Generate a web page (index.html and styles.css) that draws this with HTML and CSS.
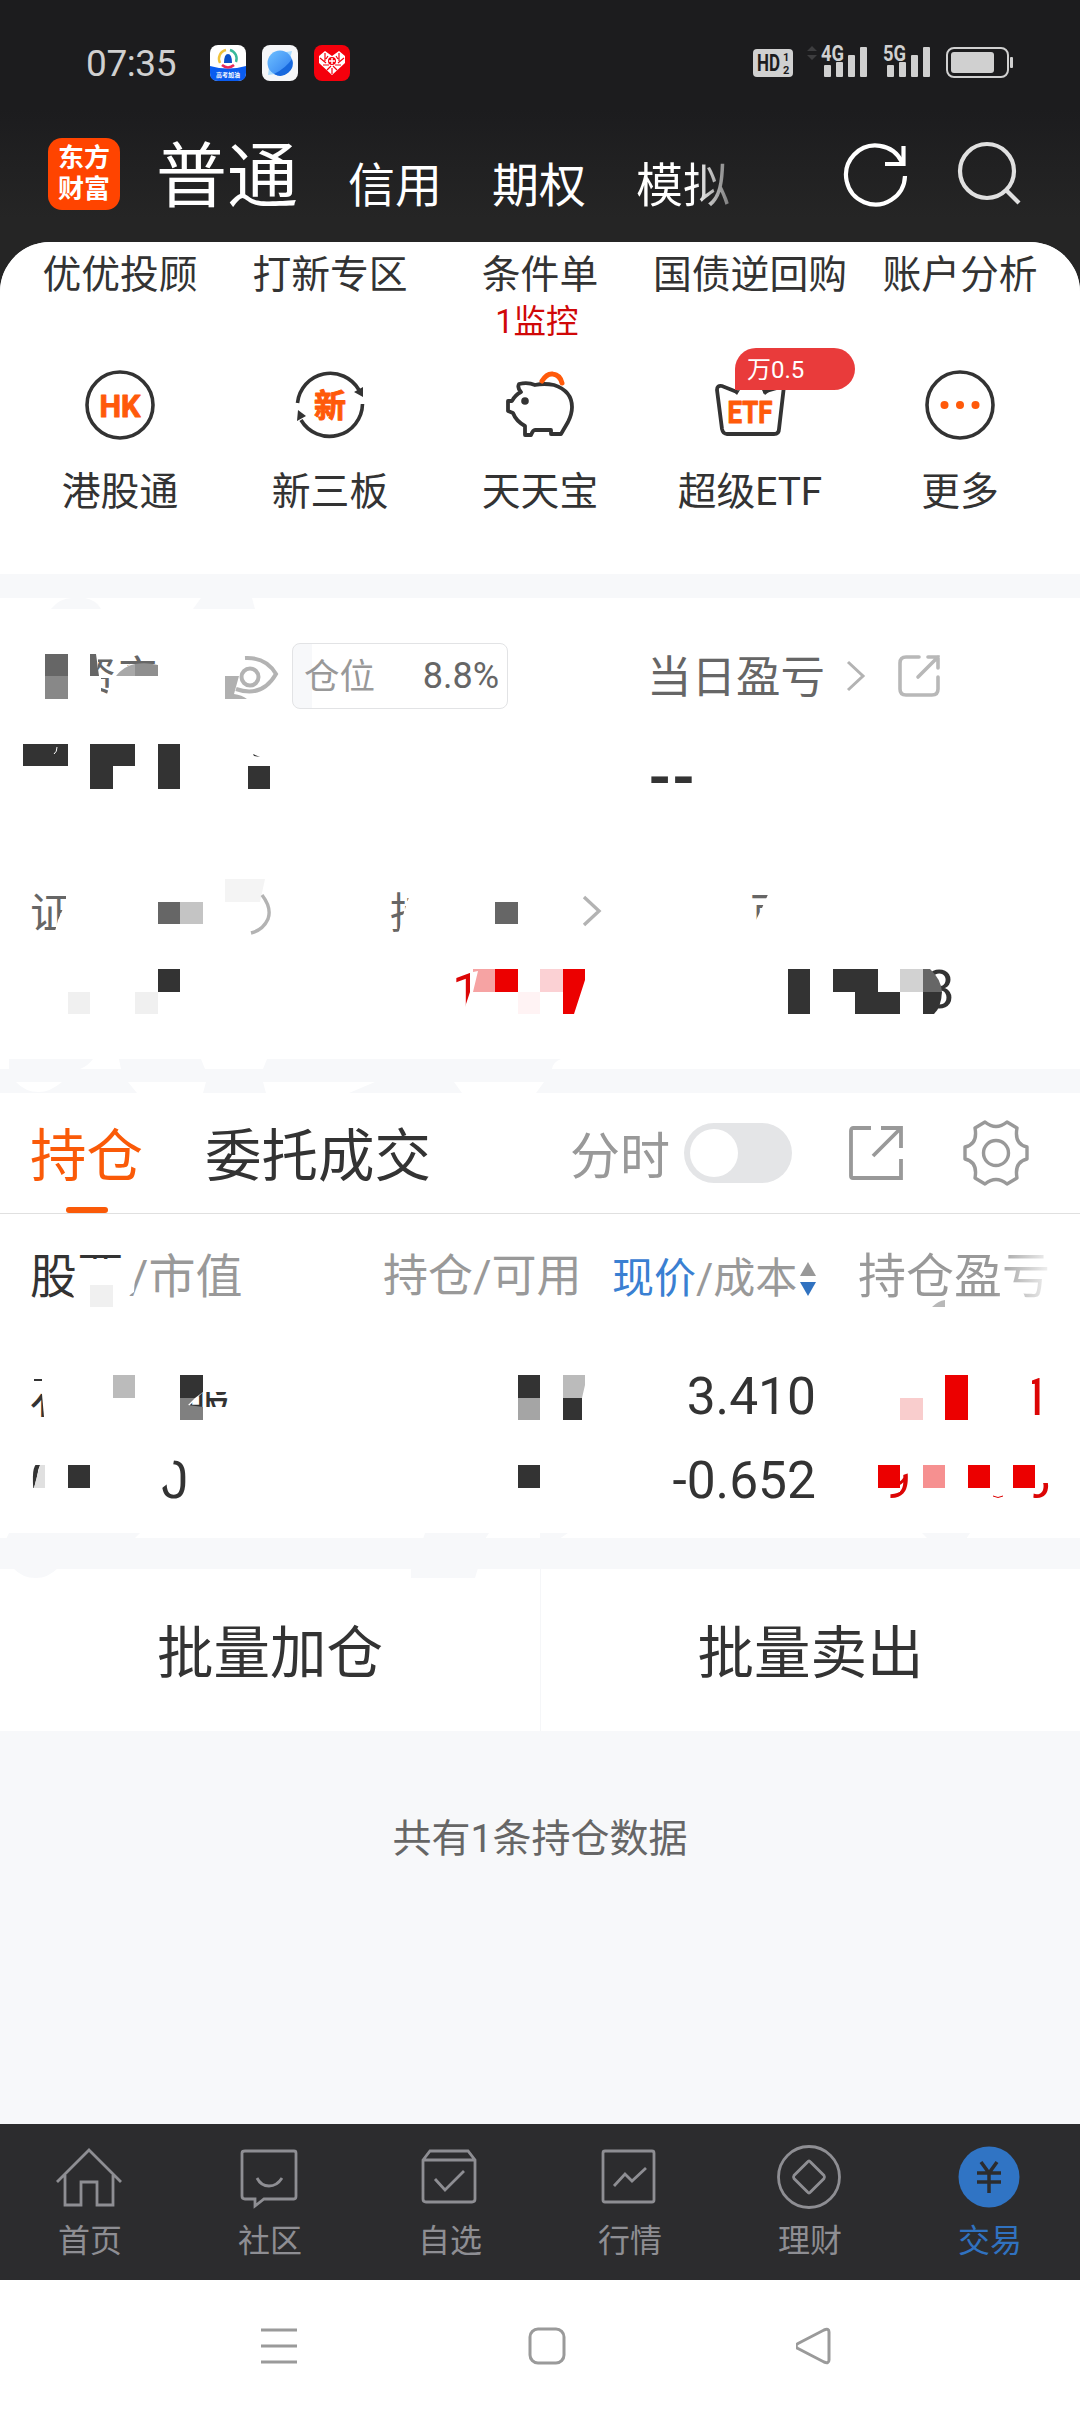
FILE: index.html
```html
<!DOCTYPE html>
<html lang="zh-CN">
<head>
  <meta charset="UTF-8" />
  <meta name="viewport" content="width=device-width, initial-scale=1.0"/>
  <title>交易</title>
  <link rel="stylesheet" href="styles.css">
</head>
<body>
  <header class="top">
    <div class="status-bar">
      <span class="time">07:35</span>
      <div class="app-icons">
        <svg width="36" height="36" viewBox="0 0 36 36">
          <rect width="36" height="36" rx="8" fill="#fff"/>
          <path d="M0 21Q18 26 36 21V28Q36 36 28 36H8Q0 36 0 28Z" fill="#0a5cf0"/>
          <path d="M10 18A9 9 0 0 1 16 5" fill="none" stroke="#f0c23a" stroke-width="2.4"/>
          <path d="M20 5A9 9 0 0 1 26 17" fill="none" stroke="#39b99a" stroke-width="2.4"/>
          <path d="M12 20Q18 25 24 20" fill="none" stroke="#e8295b" stroke-width="2.6"/>
          <path d="M14 18Q14 9 18 9T22 18Z" fill="#0b50c8"/>
          <text x="18" y="32" class="app-mini">高考加油</text>
        </svg>
        <svg width="36" height="36" viewBox="0 0 36 36">
          <defs>
            <linearGradient id="planet" x1="0" y1="0" x2="1" y2="1">
              <stop offset="0" stop-color="#6fc0ff"/>
              <stop offset="1" stop-color="#2d7df0"/>
            </linearGradient>
          </defs>
          <rect width="36" height="36" rx="8" fill="#f5f6f8"/>
          <path d="M24 7L30 6L28 14ZM7 23L6 30L13 29Z" fill="#a9dcff"/>
          <circle cx="18" cy="18" r="12.5" fill="url(#planet)"/>
          <path d="M30 14A12.5 12.5 0 0 1 12 29Q24 23 30 14Z" fill="#1768dd"/>
        </svg>
        <svg width="36" height="36" viewBox="0 0 36 36">
          <rect width="36" height="36" rx="8" fill="#f5000c"/>
          <path d="M18 30L5 18V11L11 6L18 11L25 6L31 11V18Z" fill="#fff"/>
          <path d="M6 13L12 18M11 8V16M25 8V16M30 13L24 18M9 20H15M21 20H27M14 11L12 14M22 11L24 14M13 25L17 21M23 25L19 21M18 23V29" stroke="#f5000c" stroke-width="1.2"/>
          <circle cx="18" cy="16" r="4" fill="#f5000c"/>
          <path d="M15 16H21M18 13V19" stroke="#fff" stroke-width="1.4"/>
        </svg>
      </div>
      <svg class="signals" width="262" height="56" viewBox="752 35 262 56">
        <rect x="753" y="49" width="40" height="28" rx="4" fill="#d0d0d0"/>
        <text x="757" y="71" class="hd" textLength="23" lengthAdjust="spacingAndGlyphs">HD</text>
        <text x="783" y="61" class="hd-sub">1</text>
        <text x="783" y="74" class="hd-sub">2</text>
        <path d="M807 51L812 46L817 51ZM807 55L812 60L817 55Z" fill="#3d3d3f"/>
        <g fill="#d0d0d0">
          <text x="821" y="61" class="net" textLength="23" lengthAdjust="spacingAndGlyphs">4G</text>
          <rect x="824" y="65" width="7" height="12" rx="1"/>
          <rect x="836" y="62" width="7" height="15" rx="1"/>
          <rect x="848" y="55" width="7" height="22" rx="1"/>
          <rect x="860" y="47" width="7" height="30" rx="1"/>
          <text x="883" y="61" class="net" textLength="23" lengthAdjust="spacingAndGlyphs">5G</text>
          <rect x="887" y="65" width="7" height="12" rx="1"/>
          <rect x="899" y="62" width="7" height="15" rx="1"/>
          <rect x="911" y="55" width="7" height="22" rx="1"/>
          <rect x="923" y="47" width="7" height="30" rx="1"/>
          <rect x="951" y="52" width="43" height="21" rx="3"/>
          <rect x="1010" y="57" width="3" height="11" rx="1"/>
        </g>
        <rect x="947" y="48" width="61" height="29" rx="7" fill="none" stroke="#d0d0d0" stroke-width="2"/>
      </svg>
    </div>
    <nav class="account-nav">
      <div class="logo"><span>东方</span><span>财富</span></div>
      <span class="account active">普通</span>
      <span class="account">信用</span>
      <span class="account">期权</span>
      <span class="account fade">模拟</span>
      <svg class="refresh" width="66" height="66" viewBox="843 142 66 66" fill="none" stroke="#fff" stroke-width="4.2">
        <path d="M905 176A29.500 29.500 0 1 1 902 162"/>
        <path d="M903.500 146V164H885"/>
      </svg>
      <svg class="search" width="66" height="66" viewBox="956 140 66 66" fill="none" stroke="#e0e0e0" stroke-width="4.2">
        <circle cx="987" cy="171" r="27"/>
        <path d="M1006 190L1019 203"/>
      </svg>
    </nav>
  </header>

  <main>
    <section class="menu">
      <div class="menu-row">
        <div class="menu-item"><span>优优投顾</span></div>
        <div class="menu-item"><span>打新专区</span></div>
        <div class="menu-item"><span>条件单</span><small>1监控</small></div>
        <div class="menu-item"><span>国债逆回购</span></div>
        <div class="menu-item"><span>账户分析</span></div>
      </div>
      <div class="menu-row icons">
        <div class="menu-item">
          <svg width="76" height="76" viewBox="-38 -38 76 76">
            <circle r="33" fill="none" stroke="#333" stroke-width="3.6"/>
            <text x="0" y="12" class="icon-text" textLength="41" lengthAdjust="spacingAndGlyphs">HK</text>
          </svg>
          <span>港股通</span>
        </div>
        <div class="menu-item">
          <svg width="76" height="76" viewBox="-38 -38 76 76">
            <path d="M-32.500 -2A33 33 0 0 1 29 -15M32.500 -1A33 33 0 0 1 -29 15" fill="none" stroke="#333" stroke-width="3.6"/>
            <path d="M24 -13L33 -18V-8ZM-24 11L-32 5L-33 16Z" fill="#333"/>
            <text x="0" y="12" class="icon-text cjk">新</text>
          </svg>
          <span>新三板</span>
        </div>
        <div class="menu-item">
          <svg width="76" height="76" viewBox="-38 -38 76 76">
            <path d="M-21 -21Q-12 -23 -5 -20Q4 -22 14 -20Q32 -14 32 2Q32 9 28 17L21 29H11V25H-5V25Q-7 25 -9 30H-15V21Q-24 16 -27 8L-32 6V-4H-28Q-25 -10 -19 -13Q-23 -17 -21 -21Z" fill="none" stroke="#333" stroke-width="3.8" stroke-linejoin="round"/>
            <circle cx="-15" cy="-4" r="3.800" fill="#333"/>
            <path d="M2 -24Q7 -32 13 -31Q20 -30 22 -22" fill="none" stroke="#ff5a0a" stroke-width="5" stroke-linecap="round"/>
          </svg>
          <span>天天宝</span>
        </div>
        <div class="menu-item">
          <svg width="76" height="76" viewBox="-38 -38 76 76">
            <path d="M-13 -13L-28 -19Q-33 -20 -33 -15L-28 24Q-27 29 -23 29H24Q29 29 29 24L34 -19L13 -13" fill="none" stroke="#333" stroke-width="3.800"/>
            <path d="M-17 -14L-13 -10L-10 -15M12 -15L15 -10L20 -14" fill="#333"/>
            <text x="0" y="18" class="icon-text" textLength="45" lengthAdjust="spacingAndGlyphs">ETF</text>
          </svg>
          <em class="badge">万0.5</em>
          <span>超级ETF</span>
        </div>
        <div class="menu-item">
          <svg width="76" height="76" viewBox="-38 -38 76 76">
            <circle r="33" fill="none" stroke="#333" stroke-width="3.6"/>
            <g fill="#ff5a0a"><circle cx="-15.500" r="4"/><circle r="4"/><circle cx="15.500" r="4"/></g>
          </svg>
          <span>更多</span>
        </div>
      </div>
    </section>

    <section class="assets">
      <div class="assets-head">
        <div class="position"><span>仓位</span><b>8.8%</b></div>
        <div class="today">
          <span>当日盈亏</span>
          <svg width="20" height="32" viewBox="0 0 20 32" fill="none" stroke="#b3b3b3" stroke-width="3"><path d="M2 2L17 16L2 30"/></svg>
          <svg class="share" width="44" height="44" viewBox="0 0 44 44" fill="none" stroke="#b8b8b8" stroke-width="3.600" stroke-linecap="round">
            <path d="M22 3H9Q3 3 3 9V35Q3 41 9 41H35Q41 41 41 35V23"/>
            <path d="M31 3H41V14M41 3L21 23"/>
          </svg>
        </div>
      </div>
      <div class="today-value">--</div>

      <!-- hidden amounts -->
      <svg class="mosaic" width="1080" height="495" viewBox="0 598 1080 495">
        <defs>
          <clipPath id="c1"><path d="M98 654H158V664H130L116 676H98ZM101 678H112L107 694H101Z"/></clipPath>
          <clipPath id="c2"><path d="M30 888H66V902L58 920L54 935H30Z"/></clipPath>
          <clipPath id="c3"><path d="M388 888H412L404 912L398 935H388Z"/></clipPath>
          <clipPath id="c4"><path d="M748 890H770L762 908L756 920H748Z"/></clipPath>
          <clipPath id="c5"><path d="M450 966H470V992L464 1010H450Z"/></clipPath>
        </defs>
        <g fill="#f7f8fa">
          <path d="M51 609Q60 598 72 598H85Q96 600 101 609ZM193 609L201 598H252L255 609Z"/>
          <path d="M9 1069V1059H93Q88 1066 80 1069ZM121 1069L119 1059H201L205 1069ZM263 1069L267 1059H561Q553 1062 552 1069Z"/>
        </g>
        <path d="M16 1082H62Q50 1092 39 1092Q25 1092 16 1082ZM128 1082H206L203 1093H137ZM263 1082H375L349 1093H266ZM454 1082H544L536 1093H462Z" fill="#fff"/>
        <g class="frag" clip-path="url(#c1)"><text x="73" y="692" font-size="43">资产</text></g>
        <path d="M45 654H68V676H45ZM90 654H96L99 676H90Z" fill="#666"/>
        <path d="M45 676H68V699H45Z" fill="#888"/>
        <path d="M116 676Q124 666 135 664V676Z" fill="#a8a8a8"/>
        <path d="M135 664Q146 662 158 665V676H135Z" fill="#8f8f8f"/>
        <path d="M245 658Q266 657 276 674Q262 698 236 689" fill="none" stroke="#b3b3b3" stroke-width="4"/>
        <circle cx="250" cy="677" r="8.500" fill="none" stroke="#b3b3b3" stroke-width="4"/>
        <path d="M225 676H239L234 694Q242 695 247 699H225Z" fill="#b0b0b0"/>
        <g fill="#333">
          <path d="M23 744H68V766H23ZM90 744H135V766H113V789H90ZM158 744H180V789H158ZM248 766H270V789H248ZM253 754L260 757L254 756Z"/>
          <path d="M158 969H180V992H158ZM788 969H810V1014H788ZM833 969H878V992H900V1014H855V992H833Z"/>
        </g>
        <path d="M57 747Q57 752 54 754" stroke="#fff" fill="none"/>
        <g class="frag" clip-path="url(#c2)"><text x="30" y="928" font-size="42">证</text></g>
        <g class="frag" clip-path="url(#c3)"><text x="390" y="928" font-size="42">持</text></g>
        <g class="frag" clip-path="url(#c4)"><text x="750" y="928" font-size="42">可</text></g>
        <path d="M158 902H180V924H158ZM495 902H518V924H495Z" fill="#666"/>
        <path d="M180 902H203V924H180Z" fill="#c4c4c4"/>
        <path d="M225 879H265L260 902H225Z" fill="#f4f4f4"/>
        <path d="M262 895Q272 908 268 919Q263 930 251 933M584 897L599 911L584 925" fill="none" stroke="#b3b3b3" stroke-width="3.400"/>
        <path d="M68 992H90V1014H68ZM135 992H158V1014H135Z" fill="#f0f0f0"/>
        <g class="frag red" clip-path="url(#c5)"><text x="452" y="1010" font-size="52">1</text></g>
        <path d="M473 969H495V992H473L478 971L473 972Z" fill="#f6a3a3"/>
        <path d="M495 969H518V992H495ZM563 969H585V980L574 1014H563Z" fill="#ec0000"/>
        <path d="M540 969H563V992H540Z" fill="#fbd1d4"/>
        <path d="M518 992H540V1014H518Z" fill="#fff3f4"/>
        <text x="924" y="1008" font-size="54" fill="#333">8</text>
        <path d="M900 969H923V992H900Z" fill="#d2d2d2"/>
        <path d="M923 969H930Q941 979 942 992H923Z" fill="#666"/>
        <path d="M923 992H942Q941 1008 934 1014H923Z" fill="#333"/>
      </svg>
    </section>

    <section class="holdings">
      <div class="tabs">
        <span class="tab active">持仓</span>
        <span class="tab">委托成交</span>
        <span class="tab-label">分时</span>
        <span class="toggle"></span>
        <svg class="tab-share" width="56" height="56" viewBox="0 0 56 56" fill="none" stroke="#999" stroke-width="3.800">
          <path d="M23 3H5Q3 3 3 6V51Q3 53 5 53H53V34M33 3H53V23M53 3L25 31"/>
        </svg>
        <svg class="gear" width="68" height="68" viewBox="-34 -34 68 68" fill="none" stroke="#999" stroke-width="3.400" stroke-linejoin="round">
          <circle r="12.500"/>
          <path d="M-11 -31Q0 -22 11 -31L21 -25Q18 -9 31 -6V6Q18 9 21 25L11 31Q0 22 -11 31L-21 25Q-18 9 -31 6V-6Q-18 -9 -21 -25Z"/>
        </svg>
      </div>
      <div class="table-head">
        <span class="col-name"><b>股票</b>/市值</span>
        <span class="col-hold">持仓/可用</span>
        <span class="col-price"><b>现价</b>/成本<svg width="16" height="36" viewBox="0 0 16 36"><path d="M0 15L8 1L16 15Z" fill="#999"/><path d="M0 21L8 35L16 21Z" fill="#3072c0"/></svg></span>
        <span class="col-profit">持仓盈亏</span>
      </div>
      <div class="table-row">
        <div>3.410</div>
        <div>-0.652</div>
      </div>

      <svg class="mosaic" width="1080" height="487" viewBox="0 1093 1080 487">
        <defs>
          <clipPath id="d1"><path d="M34 1372H42V1381H34ZM30 1390L42 1394L44 1417H30Z"/></clipPath>
          <clipPath id="d2"><path d="M190 1405L203 1392H230V1407H190Z"/></clipPath>
          <clipPath id="d3"><path d="M30 1465H40L34 1488H30Z"/></clipPath>
          <clipPath id="d4"><path d="M174 1460H190V1502H162V1488L170 1482Z"/></clipPath>
          <clipPath id="d5"><path d="M900 1476L912 1472V1500H890V1492H900Z"/></clipPath>
          <clipPath id="d6"><path d="M1035 1483H1050V1500H1033Z"/></clipPath>
          <clipPath id="d7"><path d="M1032 1376H1041V1416H1034V1384H1032Z"/></clipPath>
        </defs>
        <path d="M84 1259H122L136 1262L134 1292L120 1302H78L72 1294L76 1268Z" fill="#fff"/>
        <path d="M90 1285H113V1307H90Z" fill="#f0f0f0"/>
        <path d="M932 1307Q938 1301 945 1300V1307Z" fill="#b8b8b8"/>
        <g class="frag dark">
          <g clip-path="url(#d1)"><text x="30" y="1414" font-size="46">石</text></g>
          <g clip-path="url(#d2)"><text x="184" y="1419" font-size="46">服</text></g>
          <g clip-path="url(#d3)"><text x="30" y="1498" font-size="52">0</text></g>
          <g clip-path="url(#d4)"><text x="159" y="1498" font-size="52">0</text></g>
        </g>
        <g fill="#333">
          <path d="M180 1375H203V1392L195 1398H180ZM518 1375H540V1398H518ZM563 1398H582V1420H563Z"/>
          <path d="M68 1465H90V1488H68ZM518 1465H540V1488H518Z"/>
        </g>
        <path d="M113 1375H135V1398H113ZM563 1375H585V1385L582 1398H563Z" fill="#bbb"/>
        <path d="M180 1398H195L188 1405L203 1407V1420H180Z" fill="#808080"/>
        <path d="M518 1398H540V1420H518Z" fill="#a5a5a5"/>
        <path d="M40 1465H45V1488H34Z" fill="#e0e0e0"/>
        <path d="M945 1375H968V1420H945ZM878 1465H900V1488H878ZM968 1465H990V1488H968ZM1013 1465H1035V1488H1013Z" fill="#ec0000"/>
        <path d="M900 1398H923V1420H900Z" fill="#f9cdcd"/>
        <path d="M923 1465H945V1488H923Z" fill="#f69090"/>
        <path d="M993 1496Q998 1499 1003 1496" stroke="#d00" fill="none"/>
        <g class="frag red">
          <g clip-path="url(#d7)"><text x="1021" y="1415" font-size="52">1</text></g>
          <g clip-path="url(#d5)"><text x="883" y="1498" font-size="50">9</text></g>
          <g clip-path="url(#d6)"><text x="1022" y="1498" font-size="50">5</text></g>
        </g>
        <path d="M6 1539L9 1533H140L134 1539ZM423 1539L425 1533H489L485 1539ZM540 1533H568L559 1539H540ZM922 1533H970L966 1539H928ZM13 1568H58Q48 1578 36 1578Q22 1578 13 1568ZM411 1568H478L475 1578H411Z" fill="#f7f8fa"/>
      </svg>
    </section>

    <div class="batch">
      <button>批量加仓</button>
      <button>批量卖出</button>
    </div>
    <p class="count">共有1条持仓数据</p>
  </main>

  <footer class="tabbar">
    <a class="tabbar-item">
      <svg width="68" height="68" viewBox="-34 -34 68 68">
        <path d="M-32 5L0 -27L32 5M-24 -2V28H-8V5H8V28H24V-2"/>
      </svg>
      <span>首页</span>
    </a>
    <a class="tabbar-item">
      <svg width="68" height="68" viewBox="-34 -34 68 68">
        <path d="M-24 -26H25Q27 -26 27 -24V19Q27 22 25 22H-5L-14 29V22H-24Q-27 22 -27 19V-24Q-27 -26 -24 -26ZM-12 1Q-8 9 0 9Q8 9 13 1"/>
      </svg>
      <span>社区</span>
    </a>
    <a class="tabbar-item">
      <svg width="68" height="68" viewBox="-34 -34 68 68">
        <path d="M-26 -17L-19 -26H19L26 -17V22Q26 25 23 25H-23Q-26 25 -26 22ZM-26 -17H26M-14 2L-4 13L15 -6"/>
      </svg>
      <span>自选</span>
    </a>
    <a class="tabbar-item">
      <svg width="68" height="68" viewBox="-34 -34 68 68">
        <rect x="-26" y="-26" width="51" height="51" rx="2"/>
        <path d="M-15 9L-4 -3L3 4L17 -9"/>
      </svg>
      <span>行情</span>
    </a>
    <a class="tabbar-item">
      <svg width="68" height="68" viewBox="-34 -34 68 68">
        <circle r="30.500"/>
        <path d="M-1.500 -15Q0 -17 1.500 -15L15 -1.500Q16 0 15 1.500L1.500 15Q0 17 -1.500 15L-15 1.500Q-16 0 -15 -1.500Z"/>
      </svg>
      <span>理财</span>
    </a>
    <a class="tabbar-item active">
      <svg width="68" height="68" viewBox="-34 -34 68 68">
        <circle r="30.500" class="coin"/>
        <path class="yen" d="M-8 -15L0 -4L8 -15M0 -4V16M-12 -4H12M-12 5H12"/>
      </svg>
      <span>交易</span>
    </a>
  </footer>

  <div class="system-nav">
    <svg width="38" height="38" viewBox="0 0 38 38"><path d="M1 3H37M1 19H37M1 35H37"/></svg>
    <svg width="38" height="38" viewBox="0 0 38 38"><rect x="2" y="2" width="34" height="34" rx="8"/></svg>
    <svg width="38" height="38" viewBox="2 0 38 38"><path d="M4 16.500L30 3Q35 1 35 5V33Q35 37 30 35L4 21.500Q0 19 4 16.500Z"/></svg>
  </div>
</body>
</html>
```
FILE: styles.css
```css
* {
  box-sizing: border-box;
}
body {
  margin: 0;
  width: 1080px;
  height: 2412px;
  font-family: Roboto, "Noto Sans CJK SC", sans-serif;
  color: #333;
  background-color: #f7f8fa;
  overflow: hidden;
}
svg {
  display: block;
  flex-shrink: 0;
}
main {
  height: 1882px;
  background-color: #f7f8fa;
  border-radius: 50px 50px 0 0;
  overflow: hidden;
}
body::before {
  content: "";
  position: absolute;
  z-index: -1;
  top: 0;
  left: 0;
  width: 1080px;
  height: 300px;
  background: #252525;
}

/* header */
.top {
  height: 242px;
  background: linear-gradient(#1c1c1e 45%, #252525 90%);
}
.status-bar {
  display: flex;
  align-items: center;
  height: 126px;
  padding-left: 86px;
}
.time {
  width: 124px;
  font-size: 37px;
  letter-spacing: -0.4px;
  color: #d0d0d0;
}
.app-icons {
  display: flex;
  gap: 16px;
  width: 542px;
}
.app-mini {
  font-size: 6px;
  font-weight: bold;
  fill: #fff;
  text-anchor: middle;
}
.hd {
  font-size: 23px;
  font-weight: bold;
  fill: #1c1c1e;
}
.hd-sub {
  font-size: 11px;
  font-weight: bold;
  fill: #1c1c1e;
}
.net {
  font-size: 22px;
  font-weight: bold;
}
.account-nav {
  display: flex;
  height: 116px;
  padding-left: 48px;
}
.logo {
  display: flex;
  flex-direction: column;
  justify-content: center;
  width: 72px;
  height: 72px;
  margin: 12px 36px 0 0;
  border-radius: 14px;
  background-color: #ff4400;
  color: #fff;
  font-size: 26px;
  font-weight: bold;
  line-height: 31px;
  text-align: center;
}
.account {
  width: 144px;
  padding-top: 28px;
  font-size: 47px;
  line-height: 64px;
  color: #fff;
  white-space: nowrap;
}
.account.active {
  width: 192px;
  padding-top: 19px;
  font-size: 71px;
}
.account.fade {
  width: 95px;
  color: transparent;
  background: linear-gradient(90deg, #fff 60%, #777 100%);
  -webkit-background-clip: text;
  background-clip: text;
}
.refresh {
  margin: 16px 0 0 112px;
}
.search {
  margin: 14px 0 0 47px;
}

/* shortcuts */
.menu {
  height: 332px;
  background-color: #fff;
}
.menu-row {
  display: grid;
  grid-template-columns: repeat(5, 210px);
  justify-content: center;
  height: 125px;
  padding-top: 9px;
}
.menu-row.icons {
  padding-top: 0;
}
.menu-item {
  position: relative;
  display: flex;
  flex-direction: column;
  align-items: center;
  font-size: 38.8px;
  line-height: 48px;
  white-space: nowrap;
}
.menu-item small {
  margin-right: 6px;
  font-size: 32.5px;
  line-height: 46px;
  color: #d00808;
}
.icons span {
  margin-top: 25px;
}
.icon-text {
  font-size: 32px;
  font-weight: bold;
  fill: #ff5a0a;
  stroke: #ff5a0a;
  stroke-width: 1;
  stroke-linejoin: round;
  text-anchor: middle;
}
.badge {
  position: absolute;
  top: -19px;
  left: 90px;
  width: 120px;
  height: 42px;
  padding-left: 12px;
  border-radius: 21px 21px 21px 0;
  background-color: #e93b3b;
  color: #fff;
  font-size: 24px;
  font-style: normal;
  line-height: 44px;
}

/* assets */
.assets {
  position: relative;
  height: 471px;
  margin-top: 24px;
  padding-top: 45px;
  background-color: #fff;
}
.mosaic {
  position: absolute;
  top: 0;
  left: 0;
}
.frag {
  fill: #666;
}
.frag.dark {
  fill: #333;
}
.frag.red {
  fill: #dc0505;
}
.assets-head {
  display: flex;
  align-items: center;
  height: 66px;
  padding-left: 292px;
}
.position {
  display: flex;
  justify-content: space-between;
  align-items: center;
  width: 216px;
  height: 66px;
  padding: 0 8px 0 11px;
  border: 1px solid #e2e3e5;
  border-radius: 8px;
  background: linear-gradient(90deg, #f7f8fa 19px, #fff 19px);
  color: #999;
  font-size: 35.5px;
}
.position span {
  padding-bottom: 5px;
}
.position b {
  color: #666;
  font-size: 36px;
  font-weight: normal;
}
.today {
  display: flex;
  align-items: center;
  margin-left: 139px;
  color: #666;
  font-size: 44.5px;
}
.today span {
  width: 199px;
  padding-bottom: 5px;
}
.share {
  margin-left: 31px;
}
.today-value {
  margin: 34px 0 0 648px;
  font-size: 60px;
  font-weight: bold;
  line-height: 70px;
}

/* holdings */
.holdings {
  position: relative;
  height: 445px;
  margin-top: 24px;
  background-color: #fff;
}
.tabs {
  display: flex;
  align-items: center;
  height: 121px;
  padding-left: 30px;
  border-bottom: 1px solid #e0e0e0;
}
.tab {
  position: relative;
  width: 175px;
  padding-bottom: 4px;
  font-size: 56.5px;
}
.tab + .tab {
  width: 365px;
}
.tab.active {
  color: #fa5a08;
}
.tab.active::after {
  content: "";
  position: absolute;
  left: 36px;
  bottom: -17px;
  width: 42px;
  height: 6px;
  border-radius: 3px;
  background-color: #fa5a08;
}
.tab-label {
  width: 114px;
  padding-bottom: 2px;
  color: #999;
  font-size: 50px;
}
.toggle {
  width: 108px;
  height: 60px;
  padding: 6px;
  border-radius: 30px;
  background-color: #e4e5e7;
}
.toggle::before {
  content: "";
  display: block;
  width: 48px;
  height: 48px;
  border-radius: 50%;
  background-color: #fff;
}
.tab-share {
  margin-left: 56px;
}
.gear {
  margin-left: 58px;
}
.table-head {
  display: flex;
  height: 125px;
  padding: 33px 0 0 30px;
  color: #999;
  line-height: 60px;
  white-space: nowrap;
}
.table-head b {
  font-weight: normal;
}
.col-name {
  width: 353px;
  font-size: 47px;
}
.col-name b {
  margin-right: 5px;
  color: #333;
}
.col-hold {
  width: 229px;
  font-size: 45px;
}
.col-price {
  display: flex;
  align-items: center;
  width: 246px;
  height: 64px;
  font-size: 42px;
}
.col-price b {
  color: #3a80d2;
}
.col-price svg {
  margin-left: 3px;
}
.col-profit {
  width: 200px;
  font-size: 48px;
  color: transparent;
  background: linear-gradient(90deg, #999 68%, #f5f5f5 97%);
  -webkit-background-clip: text;
  background-clip: text;
}
.table-row {
  width: 816px;
  padding-top: 16px;
  font-size: 51.5px;
  line-height: 84px;
  text-align: right;
}

/* bottom of the list */
.batch {
  display: grid;
  grid-template-columns: 1fr 1fr;
  height: 162px;
  margin-top: 31px;
}
.batch button {
  padding: 0 0 4px 0;
  border: none;
  background-color: #fff;
  color: #333;
  font-family: inherit;
  font-size: 56.5px;
}
.batch button + button {
  border-left: 1px solid #f5f6f8;
}
.count {
  margin: 78px 0 0;
  color: #666;
  font-size: 39px;
  line-height: 60px;
  text-align: center;
}

/* tab bar */
.tabbar {
  display: grid;
  grid-template-columns: repeat(6, 1fr);
  height: 156px;
  padding-top: 20px;
  background-color: #2c2c2e;
}
.tabbar-item {
  display: flex;
  flex-direction: column;
  align-items: center;
  color: #8e8e93;
  font-size: 32px;
  line-height: 40px;
}
.tabbar-item span {
  margin-top: 10px;
}
.tabbar-item svg {
  margin-top: -1px;
  margin-right: 2px;
  fill: none;
  stroke: #8e8e93;
  stroke-width: 2.800;
}
.tabbar-item.active {
  color: #3072c0;
}
.tabbar-item .coin {
  fill: #3074c4;
  stroke: none;
}
.tabbar-item .yen {
  stroke: #2c2c2e;
  stroke-width: 3.500;
}
.system-nav {
  display: flex;
  align-items: center;
  gap: 230px;
  height: 132px;
  padding-left: 260px;
  background-color: #fff;
}
.system-nav svg {
  fill: none;
  stroke: #9a9a9a;
  stroke-width: 3;
}
```
